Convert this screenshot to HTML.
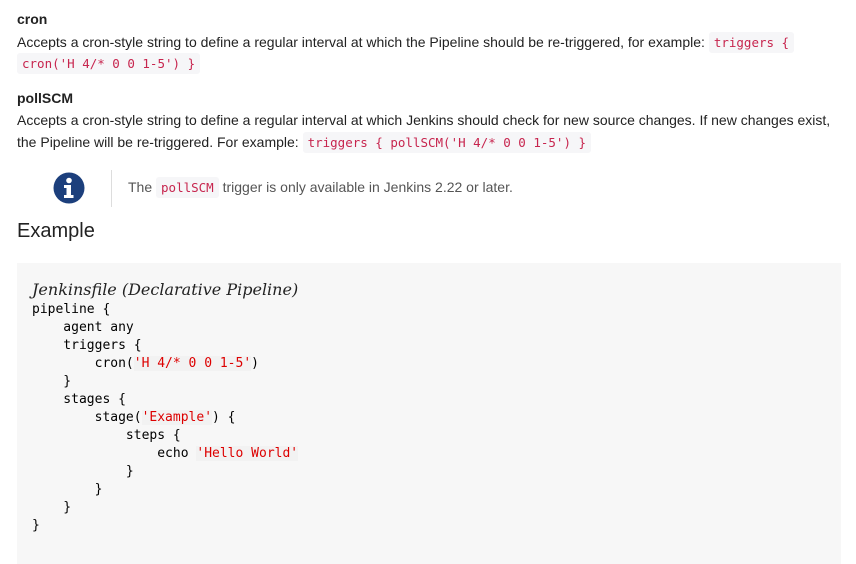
<!DOCTYPE html>
<html><head><style>
body{margin:0;width:856px;height:564px;overflow:hidden;background:#fff;font-family:"Liberation Sans",sans-serif;font-size:14px;color:#222;}
.a{position:absolute;white-space:nowrap;}
code{font-family:"DejaVu Sans Mono",monospace;font-size:12.5px;color:#c7254e;background:#f6f6f8;padding:3px 5px;border-radius:3px;}
b{font-weight:bold;}
pre{margin:0;font-family:"DejaVu Sans Mono",monospace;font-size:13px;line-height:18px;color:#000;}
pre.a{white-space:pre;}
.s{color:#d00;background:#f2f2f2;}
</style></head><body>
<div class="a" style="left:17px;top:11px;"><b>cron</b></div>
<div class="a" style="left:17px;top:32px;line-height:21px;">Accepts a cron-style string to define a regular interval at which the Pipeline should be re-triggered, for example: <code>triggers {</code><br><code>cron('H 4/* 0 0 1-5') }</code></div>
<div class="a" style="left:17px;top:90px;"><b>pollSCM</b></div>
<div class="a" style="left:17px;top:110px;line-height:21.5px;">Accepts a cron-style string to define a regular interval at which Jenkins should check for new source changes. If new changes exist,<br>the Pipeline will be re-triggered. For example: <code>triggers { pollSCM('H 4/* 0 0 1-5') }</code></div>
<svg class="a" style="left:53px;top:172px" width="32" height="32" viewBox="0 0 32 32"><circle cx="16" cy="16" r="15.5" fill="#1c3f7c"/><circle cx="16" cy="8.5" r="2.8" fill="#fff"/><path d="M11 13h7v10h2.5v3h-9.5v-3h2.5v-7h-2.5z" fill="#fff"/></svg>
<div class="a" style="left:111px;top:170px;width:1px;height:37px;background:#ddd"></div>
<div class="a" style="left:128px;top:179px;color:#555;">The <code>pollSCM</code> trigger is only available in Jenkins 2.22 or later.</div>
<div class="a" style="left:17px;top:220px;font-size:20px;">Example</div>
<div class="a" style="left:17px;top:263px;width:824px;height:301px;background:#f7f7f7"></div>
<div class="a" style="left:32px;top:280px;font-family:'DejaVu Serif',serif;font-style:italic;font-size:16px;color:#222;">Jenkinsfile (Declarative Pipeline)</div>
<pre class="a" style="left:32px;top:301px;">pipeline {
    agent any
    triggers {
        cron(<span class="s">'H 4/* 0 0 1-5'</span>)
    }
    stages {
        stage(<span class="s">'Example'</span>) {
            steps {
                echo <span class="s">'Hello World'</span>
            }
        }
    }
}</pre>
</body></html>
